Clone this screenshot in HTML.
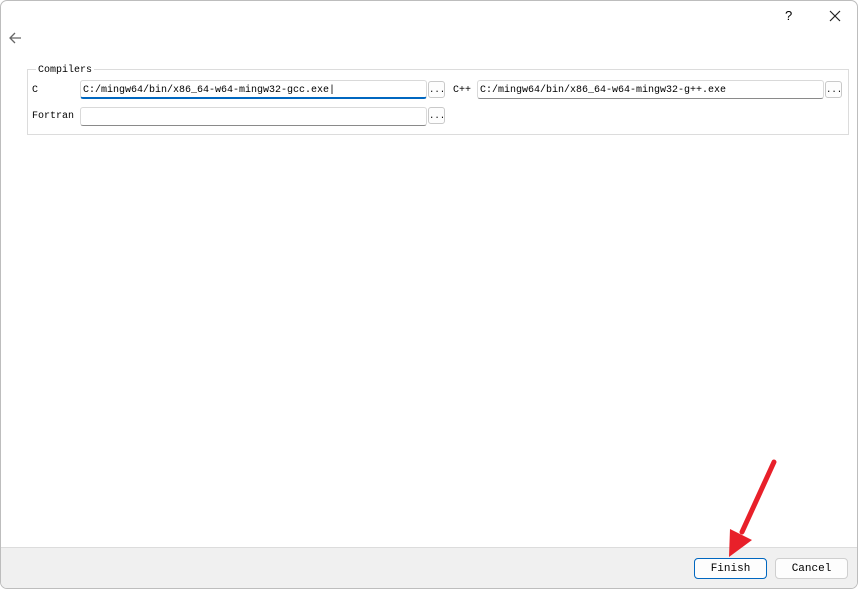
<!DOCTYPE html>
<html><head><style>
body{margin:0;width:858px;height:589px;overflow:hidden;background:#fff;font-family:"Liberation Mono","Noto Sans CJK SC",monospace;font-size:10px;color:#000;position:relative}
.win{position:absolute;left:0;top:0;width:856px;height:587px;border:1px solid #bdbdbd;border-radius:7px;overflow:hidden;background:#fff}
.a{position:absolute}
.f{position:absolute;height:19px;border:1px solid #d9d9d9;border-bottom:1px solid #8a8a8a;border-radius:3px;background:#fff;box-sizing:border-box;line-height:20px;padding-left:2px;font-family:"Liberation Mono",monospace;font-size:10px;white-space:nowrap}
.b{position:absolute;width:17px;height:17px;border:1px solid #c9c9c9;border-radius:3px;box-sizing:border-box;background:#fdfdfd;font-size:9px;text-align:center;line-height:16px}
.btn{position:absolute;height:21px;box-sizing:border-box;border:1px solid #cfcfcf;border-radius:4px;background:#fdfdfd;text-align:center;line-height:21px;font-size:11px;font-family:"Liberation Mono",monospace}
.lbl{position:absolute;font-family:"Liberation Mono",monospace;font-size:10px}
</style></head><body>
<div class="win">
<div class="a" style="left:784px;top:7px;font-size:13px;font-family:'Liberation Sans',sans-serif">?</div>
<svg class="a" style="left:828px;top:9px" width="12" height="12"><path d="M1 1L11 11M11 1L1 11" stroke="#222" stroke-width="1.2"/></svg>
<svg class="a" style="left:7px;top:31px" width="14" height="12"><path d="M13 6H2M7 1L2 6L7 11" stroke="#666" stroke-width="1.3" fill="none"/></svg>
<div class="a" style="left:26px;top:68px;width:820px;height:64px;border:1px solid #dcdcdc"></div>
<div class="lbl" style="left:35px;top:64px;background:#fff;padding:0 2px">Compilers</div>
<div class="lbl" style="left:31px;top:84px">C</div>
<div class="f" style="left:79px;top:79px;width:347px;border-bottom:2px solid #0067c0">C:/mingw64/bin/x86_64-w64-mingw32-gcc.exe|</div>
<div class="b" style="left:427px;top:80px">...</div>
<div class="lbl" style="left:452px;top:84px">C++</div>
<div class="f" style="left:476px;top:79px;width:347px">C:/mingw64/bin/x86_64-w64-mingw32-g++.exe</div>
<div class="b" style="left:824px;top:80px">...</div>
<div class="lbl" style="left:31px;top:110px">Fortran</div>
<div class="f" style="left:79px;top:106px;width:347px"></div>
<div class="b" style="left:427px;top:106px">...</div>
<div class="a" style="left:0;top:546px;width:858px;height:42px;background:#f0f0f0;border-top:1px solid #dcdcdc"></div>
<div class="btn" style="left:693px;top:557px;width:73px;border:1px solid #0067c0">Finish</div>
<div class="btn" style="left:774px;top:557px;width:73px">Cancel</div>
<svg class="a" style="left:-1px;top:-1px" width="858" height="589"><line x1="774" y1="462" x2="742" y2="532" stroke="#e8202a" stroke-width="5" stroke-linecap="round"/><path d="M729 557L730 529L752 540Z" fill="#e8202a"/></svg>
</div>
</body></html>
